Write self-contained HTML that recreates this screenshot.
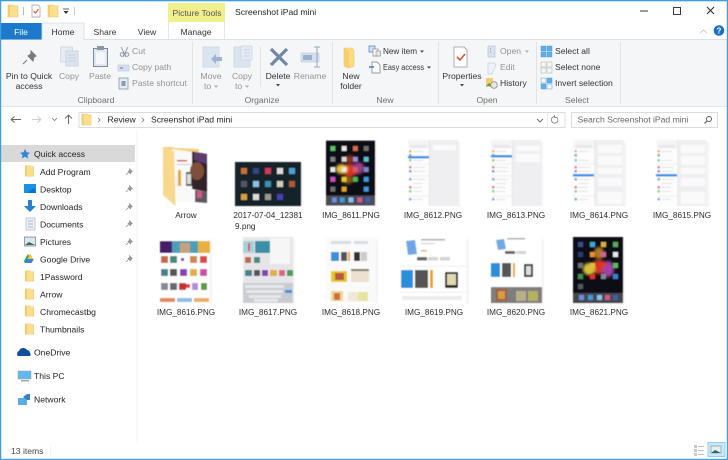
<!DOCTYPE html>
<html><head><meta charset="utf-8"><style>
html,body{margin:0;padding:0;background:#fff;width:728px;height:460px;overflow:hidden}
svg{display:block}
text{font-family:"Liberation Sans",sans-serif;font-size:8.6px;fill:#333}
.d{fill:#929292}.m{text-anchor:middle}.g{fill:#6f6f6f}.l{text-anchor:middle;font-size:8.2px;fill:#2c2c2c}.w{fill:#fff}
</style></head><body>
<svg width="728" height="460" viewBox="0 0 728 460" xmlns="http://www.w3.org/2000/svg">
<defs>
<filter id="t" filterUnits="userSpaceOnUse" x="0" y="0" width="728" height="460"><feGaussianBlur stdDeviation="0.28"/></filter>
<filter id="b" x="-10%" y="-10%" width="120%" height="120%"><feGaussianBlur stdDeviation="0.4"/></filter>
<filter id="bb" x="-30%" y="-30%" width="160%" height="160%"><feGaussianBlur stdDeviation="1.400"/></filter>
<filter id="s" x="-10%" y="-10%" width="120%" height="120%"><feGaussianBlur stdDeviation="0.8"/></filter>
<symbol id="f" viewBox="0 0 12 14" overflow="visible"><path d="M1 1h6v1h4v11H1z" fill="#fbdf8e" stroke="#e6c56c" stroke-width=".6"/><path d="M1 1h2v12H1z" fill="#f2cd6d"/></symbol>
<symbol id="p" viewBox="0 0 8 8"><path d="M4.500 .8l2.700 2.700-1 .5-.8 1.800-2.400-2.400 1.800-.8zM3.400 4.600L1 7" fill="#9b9b9b" stroke="#8a8a8a" stroke-width=".7"/></symbol>
<symbol id="set" viewBox="0 0 50 66">
<rect width="50" height="66" fill="#efeff2"/><rect width="21" height="66" fill="#f5f5f7"/><rect x="21" width=".5" height="66" fill="#d8d8dc"/>
<rect x="2" y="5" width="17" height="2.500" fill="#e6e6ea"/>
<g fill="#fdfdfd"><rect y="9" width="21" height="14"/><rect y="25" width="21" height="10"/><rect y="37" width="21" height="18"/><rect y="57" width="21" height="9"/></g>
<g fill="#f0b060"><rect x="1" y="10" width="2.500" height="2.500"/></g><g fill="#70a8e8"><rect x="1" y="14" width="2.500" height="2.500"/><rect x="1" y="38" width="2.500" height="2.500"/><rect x="1" y="58" width="2.500" height="2.500"/></g><g fill="#ea7a7a"><rect x="1" y="26" width="2.500" height="2.500"/><rect x="1" y="46" width="2.500" height="2.500"/></g><g fill="#88d0a0"><rect x="1" y="19" width="2.500" height="2.500"/><rect x="1" y="50" width="2.500" height="2.500"/></g><rect x="1" y="30" width="2.500" height="2.500" fill="#9488dc"/>
<g fill="#dadade"><rect x="5" y="11" width="10" height=".8"/><rect x="5" y="20" width="10" height=".8"/><rect x="5" y="27" width="12" height=".8"/><rect x="5" y="31" width="12" height=".8"/><rect x="5" y="39" width="12" height=".8"/><rect x="5" y="43" width="10" height=".8"/><rect x="5" y="47" width="9" height=".8"/><rect x="5" y="51" width="9" height=".8"/><rect x="5" y="59" width="9" height=".8"/></g>
</symbol>
<symbol id="ipadA" viewBox="0 0 50 66">
<rect width="50" height="66" fill="#101014"/>
<g filter="url(#bb)"><ellipse cx="25" cy="30" rx="9" ry="6" fill="#e03020"/><ellipse cx="16" cy="29" rx="6" ry="5" fill="#e8c040"/><ellipse cx="33" cy="28" rx="6" ry="6" fill="#963c90"/><ellipse cx="24" cy="19" rx="5" ry="4" fill="#8a3020"/><ellipse cx="22" cy="40" rx="6" ry="4" fill="#8a5a14"/></g>
<rect x="4.500" y="5.500" width="5" height="5" fill="#54c468"/><rect x="16" y="5.500" width="5" height="5" fill="#e8e8e8"/><rect x="27.500" y="5.500" width="5" height="5" fill="#d86a50"/><rect x="38.500" y="5.500" width="5" height="5" fill="#707070"/>
<rect x="4.500" y="16.500" width="5" height="5" fill="#808080"/><rect x="16" y="16.500" width="5" height="5" fill="#d8d8d8"/><rect x="27.500" y="16.500" width="5" height="5" fill="#9a8ad0"/><rect x="38.500" y="16.500" width="5" height="5" fill="#5cc0d0"/>
<rect x="4.500" y="27" width="5" height="5" fill="#e8e8e8"/><rect x="16" y="27" width="5" height="5" fill="#e8e8d8"/><rect x="27.500" y="27" width="5" height="5" fill="#e05a50"/><rect x="38.500" y="27" width="5" height="5" fill="#7a88c8"/>
<rect x="4.500" y="37" width="5" height="5" fill="#d050c0"/><rect x="16" y="37" width="5" height="5" fill="#e8c830"/><rect x="27.500" y="37" width="5" height="5" fill="#44b860"/><rect x="38.500" y="37" width="5" height="5" fill="#3a9ae0"/>
<rect x="4.500" y="47" width="5" height="5" fill="#707070"/><rect x="16" y="47" width="5" height="5" fill="#e8a020"/><rect x="38.500" y="47" width="5" height="5" fill="#3a9ae0"/>
<rect x="0" y="56" width="50" height="10" fill="#4c4c52"/><rect x="6" y="58" width="5" height="5" fill="#6a8ee0"/><rect x="14" y="58" width="5" height="5" fill="#3a9ae0"/><rect x="23" y="58" width="5" height="5" fill="#8ac0f0"/><rect x="32" y="58" width="5" height="5" fill="#d05a90"/><rect x="40" y="58" width="5" height="5" fill="#3a60b0"/>
</symbol>
<symbol id="ipadB" viewBox="0 0 50 66">
<rect width="50" height="66" fill="#0e0e12"/>
<g filter="url(#bb)"><ellipse cx="26" cy="30" rx="8" ry="7" fill="#d83020"/><ellipse cx="16" cy="32" rx="6" ry="6" fill="#d8c038"/><ellipse cx="35" cy="32" rx="6" ry="8" fill="#a040a8"/><ellipse cx="26" cy="16" rx="5" ry="6" fill="#b07828"/></g>
<rect x="5" y="5" width="5" height="5" fill="#3a4a90"/><rect x="17" y="5" width="5" height="5" fill="#3aa8d0"/><rect x="28" y="5" width="5" height="5" fill="#d8b040"/><rect x="40" y="5" width="5" height="5" fill="#58a860"/>
<rect x="5" y="15" width="5" height="5" fill="#2a3a70"/><rect x="17" y="15" width="5" height="5" fill="#e09030"/><rect x="28" y="15" width="5" height="5" fill="#d060a0"/><rect x="40" y="15" width="5" height="5" fill="#e8e8e8"/>
<rect x="5" y="26" width="5" height="5" fill="#707070"/><rect x="17" y="26" width="5" height="5" fill="#d8c040"/><rect x="28" y="26" width="5" height="5" fill="#d83a30"/><rect x="40" y="26" width="5" height="5" fill="#58b860"/>
<rect x="5" y="37" width="5" height="5" fill="#3a9050"/><rect x="17" y="37" width="5" height="5" fill="#e03028"/><rect x="28" y="37" width="5" height="5" fill="#808890"/><rect x="40" y="37" width="5" height="5" fill="#3a80c8"/>
<rect x="5" y="47" width="5" height="5" fill="#505860"/>
<rect x="0" y="56" width="50" height="10" fill="#46464c"/><rect x="6" y="58" width="5" height="5" fill="#6a8ee0"/><rect x="15" y="58" width="5" height="5" fill="#3a9ae0"/><rect x="24" y="58" width="5" height="5" fill="#8ac0f0"/><rect x="32" y="58" width="5" height="5" fill="#d05a90"/><rect x="40" y="58" width="5" height="5" fill="#3a60b0"/>
</symbol>
</defs>
<rect width="728" height="460" fill="#fff"/>
<g filter="url(#t)">
<!-- ribbon -->
<rect x="1" y="39" width="726" height="68" fill="#f5f6f7"/>
<rect x="1" y="39" width="726" height=".8" fill="#dadbdc"/>
<rect x="1" y="106" width="726" height="1" fill="#e4e5e6"/>

<!-- qat -->
<use href="#f" x="7" y="4" width="12" height="14"/>
<rect x="23" y="7" width="1" height="8" fill="#bbb"/>
<path d="M32 5h6l2 2v10h-8z" fill="#fff" stroke="#999" stroke-width=".7"/><path d="M33.500 11l2 2 3-4" fill="none" stroke="#d8552a" stroke-width="1.100"/>
<use href="#f" x="47" y="4" width="12" height="14"/>
<path d="M63 9h6" stroke="#333" stroke-width=".8"/><path d="M63.500 11h5l-2.500 3z" fill="#333"/>
<rect x="74" y="7" width="1" height="8" fill="#ccc"/>

<!-- title -->
<text x="235" y="15" style="fill:#222">Screenshot iPad mini</text>
<path d="M640 11h8" stroke="#222" stroke-width=".9"/>
<rect x="673.500" y="7.500" width="7" height="7" fill="none" stroke="#222" stroke-width=".9"/>
<path d="M707 7l7 7M714 7l-7 7" stroke="#222" stroke-width=".9"/>
<rect x="168" y="3" width="57" height="19" fill="#eff08b"/>
<text class="m" x="197" y="16" style="fill:#555">Picture Tools</text>

<!-- tabs -->
<rect x="1" y="23" width="41" height="16.500" fill="#1a79cb"/>
<text class="m w" x="21" y="35">File</text>
<path d="M42 39.500V23h42v16.500" fill="#f5f6f7" stroke="#dadbdc" stroke-width=".8"/>
<rect x="42.500" y="38" width="41" height="3" fill="#f5f6f7"/>
<text class="m" x="63" y="35">Home</text>
<text class="m" x="105" y="35">Share</text>
<text class="m" x="147" y="35">View</text>
<path d="M168.500 22v17M224.500 22v17" stroke="#e2e2e2" stroke-width=".8"/>
<text class="m" x="196" y="35">Manage</text>
<path d="M700 33l3.500-3 3.500 3" fill="none" stroke="#bbb" stroke-width=".8"/>
<circle cx="719" cy="30.500" r="5.300" fill="#1a6fc4"/><text class="m w" x="719" y="33.500" style="font-size:8px;font-weight:bold">?</text>

<!-- ribbon: clipboard -->
<path d="M31 51l5 5-2 1-1 4-5-5 3-2zM27 60l-4 4" fill="#7d7d7d" stroke="#777" stroke-width="1"/>
<text class="m" x="29" y="79">Pin to Quick</text><text class="m" x="29" y="89">access</text>
<rect x="60.500" y="47" width="12" height="15" fill="#e6ebf3" stroke="#cbd4e0" stroke-width=".8"/><rect x="66" y="51" width="12" height="15" fill="#dbe4ef" stroke="#c5cfdd" stroke-width=".8"/>
<path d="M68 55h8M68 58h8M68 61h8" stroke="#bcc8d8" stroke-width=".8"/>
<text class="m d" x="69" y="79">Copy</text>
<rect x="93.500" y="48.500" width="14" height="18" fill="#e0e7f1" stroke="#7c8a9c" stroke-width="1"/><rect x="97" y="46" width="7" height="4" fill="#8a97a8"/><rect x="96" y="52" width="9" height="12" fill="#f5f7fa"/>
<text class="m d" x="100" y="79">Paste</text>
<path d="M121 47l5 10M128 47l-5 10" stroke="#8a99ad" stroke-width=".9"/><circle cx="122" cy="54.500" r="1.800" fill="none" stroke="#8a99ad"/><circle cx="127" cy="54.500" r="1.800" fill="none" stroke="#8a99ad"/>
<text class="d" x="132" y="54">Cut</text>
<rect x="118" y="65" width="11" height="6" fill="#d4dfed" stroke="#bcc9da" stroke-width=".6"/><path d="M120 68h3" stroke="#556" stroke-width=".8"/>
<text class="d" x="132" y="70">Copy path</text>
<rect x="119" y="78" width="9" height="11" fill="#e6ecf4" stroke="#8a99ad" stroke-width=".8"/><rect x="121.500" y="81" width="4" height="5" fill="#8a99ad"/>
<text class="d" x="132" y="86">Paste shortcut</text>
<text class="m g" x="96" y="103">Clipboard</text>
<rect x="192" y="42" width=".9" height="62" fill="#e0e1e2"/>

<!-- organize -->
<rect x="203" y="47" width="16" height="20" fill="#dbe5f1" stroke="#c8d4e3" stroke-width=".7"/><path d="M222 57h-6v-3l-5 5 5 5v-3h6z" fill="#9db3cf"/>
<text class="m d" x="211" y="79">Move</text><text class="d" x="204" y="89">to</text><path d="M214 85.500h4l-2 2.300z" fill="#a8a8a8"/>
<rect x="234" y="47" width="16" height="20" fill="#dbe5f1" stroke="#c8d4e3" stroke-width=".7"/><rect x="241" y="46" width="11" height="14" fill="#e6ebf3" stroke="#c8d4e3" stroke-width=".7"/><path d="M244 50h6M244 53h6M244 56h6" stroke="#c3cfde" stroke-width=".7"/>
<text class="m d" x="242" y="79">Copy</text><text class="d" x="235" y="89">to</text><path d="M245 85.500h4l-2 2.300z" fill="#a8a8a8"/>
<rect x="260" y="46" width=".8" height="41" fill="#dedfe0"/>
<path d="M271 49l16 16M287 49l-16 16" stroke="#6f86a6" stroke-width="3.200"/>
<text class="m" x="278" y="79">Delete</text><path d="M276 84h4l-2 2.500z" fill="#444"/>
<rect x="301" y="53" width="18" height="9" rx="1" fill="#d3dfed" stroke="#c2cfdf" stroke-width=".7"/><rect x="303" y="55" width="9" height="5" fill="#9cb0c9"/><path d="M317 47v20M314 47h6M314 67h6" stroke="#93a7c1" stroke-width="1"/>
<text class="m d" x="310" y="79">Rename</text>
<text class="m g" x="262" y="103">Organize</text>
<rect x="332" y="42" width=".9" height="62" fill="#e0e1e2"/>

<!-- new -->
<path d="M344 48h8l2 3v15l-5 2-5-2z" fill="#fbdb85" stroke="#ecc76a" stroke-width=".6"/><path d="M344 48l5 3v17l-5-2z" fill="#f6ce6c"/>
<text class="m" x="351" y="79">New</text><text class="m" x="351" y="89">folder</text>
<rect x="369" y="46" width="6" height="6" fill="#cfe0f3" stroke="#5a8cc4" stroke-width=".8"/><rect x="373" y="49" width="5" height="7" fill="#fff" stroke="#888" stroke-width=".7"/><rect x="376" y="51" width="4.500" height="5" fill="#dfe6ef" stroke="#888" stroke-width=".6"/>
<text x="383" y="54" textLength="34" lengthAdjust="spacingAndGlyphs">New item</text><path d="M420 50.500h4l-2 2.300z" fill="#444"/>
<path d="M372 62h5l3 3v8h-8z" fill="#fff" stroke="#777" stroke-width=".7"/><path d="M369 67h5" stroke="#2a70c0" stroke-width="1.300"/>
<text x="383" y="70" textLength="41" lengthAdjust="spacingAndGlyphs">Easy access</text><path d="M427 66.500h4l-2 2.300z" fill="#444"/>
<text class="m g" x="385" y="103">New</text>
<rect x="438" y="42" width=".9" height="62" fill="#e0e1e2"/>

<!-- open -->
<path d="M454 47h10l3 3v17h-13z" fill="#fff" stroke="#999" stroke-width=".8"/><path d="M457 57l3 3 5-6" fill="none" stroke="#e0552a" stroke-width="1.600"/>
<text class="m" x="462" y="79">Properties</text><path d="M460 84h4l-2 2.500z" fill="#444"/>
<rect x="488" y="46" width="7" height="11" fill="#d9e2ee" stroke="#b8c5d6" stroke-width=".7"/><path d="M490 49h1M490 52h1" stroke="#7d8ea5"/>
<text class="d" x="500" y="54">Open</text><path d="M525 50.500h4l-2 2.300z" fill="#aaa"/>
<path d="M488 63h6l2 2-4 9h-4z" fill="#eef2f8" stroke="#c3cfde" stroke-width=".7"/>
<text class="d" x="500" y="70">Edit</text>
<rect x="486" y="78" width="7" height="9" fill="#f4cf6c"/><path d="M486 86l3-3 3 3z" fill="#5aa83a"/><circle cx="494" cy="85" r="3.300" fill="#e6e6e6" stroke="#777" stroke-width=".7"/>
<text x="500" y="86">History</text>
<text class="m g" x="487" y="103">Open</text>
<rect x="536" y="42" width=".9" height="62" fill="#e0e1e2"/>

<!-- select -->
<g fill="#62aee8" stroke="#3d8fd0" stroke-width=".4"><rect x="541" y="46" width="5" height="5"/><rect x="547" y="46" width="5" height="5"/><rect x="541" y="52" width="5" height="5"/><rect x="547" y="52" width="5" height="5"/></g>
<text x="555" y="54">Select all</text>
<g fill="#f5f6f7" stroke="#bbb" stroke-width=".6"><rect x="541" y="62" width="5" height="5"/><rect x="547" y="62" width="5" height="5"/><rect x="541" y="68" width="5" height="5"/><rect x="547" y="68" width="5" height="5"/></g>
<text x="555" y="70">Select none</text>
<g stroke="#5d9bd0" stroke-width=".5"><rect x="541" y="78" width="5" height="5" fill="#f5f6f7"/><rect x="547" y="78" width="5" height="5" fill="#62aee8"/><rect x="541" y="84" width="5" height="5" fill="#62aee8"/><rect x="547" y="84" width="5" height="5" fill="#f5f6f7"/></g>
<text x="555" y="86">Invert selection</text>
<text class="m g" x="577" y="103">Select</text>
<rect x="620" y="42" width=".9" height="62" fill="#e0e1e2"/>

<!-- address row -->
<path d="M11 119.500h10M11 119.500l3.500-3M11 119.500l3.500 3" fill="none" stroke="#666" stroke-width="1"/>
<path d="M32 119.500h9M41 119.500l-3.500-3M41 119.500l-3.500 3" fill="none" stroke="#ccc" stroke-width="1"/>
<path d="M52 118l2.500 2.500 2.500-2.500" fill="none" stroke="#777" stroke-width=".8"/>
<path d="M68.500 124v-9M68.500 115l-3.500 3.500M68.500 115l3.500 3.500" fill="none" stroke="#666" stroke-width="1"/>
<rect x="79" y="112.500" width="486" height="15" fill="#fff" stroke="#d9d9d9" stroke-width=".9"/>
<use href="#f" x="81" y="113" width="11" height="13"/>
<path d="M98 118l2 2-2 2M142 118l2 2-2 2" fill="none" stroke="#666" stroke-width=".7"/>
<text x="107.500" y="122.500" style="fill:#222">Review</text>
<text x="151" y="122.500" style="fill:#222">Screenshot iPad mini</text>
<path d="M537 119l3 3 3-3" fill="none" stroke="#666" stroke-width=".9"/>
<rect x="547" y="113" width=".7" height="14" fill="#e5e5e5"/>
<path d="M557 117.500a3.300 3.300 0 1 1-2.500-1M554.500 115v2.500h2.500" fill="none" stroke="#777" stroke-width=".8"/>
<rect x="571.500" y="112.500" width="146" height="15" fill="#fff" stroke="#d9d9d9" stroke-width=".9"/>
<text x="577.500" y="122.500" style="fill:#666">Search Screenshot iPad mini</text>
<circle cx="709" cy="119" r="2.500" fill="none" stroke="#555" stroke-width=".9"/><path d="M707 121l-2.500 2.500" stroke="#555" stroke-width="1.200"/>

<!-- nav -->
<rect x="136.500" y="130" width=".8" height="313" fill="#f0f0f0"/>
<rect x="1" y="145" width="134" height="17" fill="#d9d9d9"/>
<path d="M25 149l1.500 3.300 3.500.4-2.600 2.300.8 3.500-3.200-1.900-3.200 1.900.8-3.500L20 152.700l3.500-.4z" fill="#2e86d6"/>
<text x="34" y="157" style="fill:#222">Quick access</text>
<use href="#f" x="24" y="165" width="11" height="12"/><text x="40" y="175" style="fill:#222">Add Program</text>
<rect x="24" y="184" width="12" height="9" fill="#1a8fe6"/><path d="M27 193l7-5 2 5z" fill="#0a6ec4"/><text x="40" y="192.500" style="fill:#222">Desktop</text>
<path d="M28 200h4v6h4l-6 6-6-6h4z" fill="#2e7fd0"/><text x="40" y="210" style="fill:#222">Downloads</text>
<rect x="26" y="218" width="9" height="12" fill="#eef1f5" stroke="#aab" stroke-width=".6"/><path d="M28 221h5M28 224h5M28 227h5" stroke="#7aa5cc" stroke-width=".8"/><text x="40" y="227.500" style="fill:#222">Documents</text>
<rect x="24.500" y="237" width="11" height="9" fill="#dde6ef" stroke="#777" stroke-width=".7"/><path d="M25 245l4-3 6 3z" fill="#3a6a5a"/><text x="40" y="245" style="fill:#222">Pictures</text>
<path d="M30 254l3 5h-6z" fill="#f4c430" stroke="#f4c430" stroke-width=".5"/><path d="M27 259l-2.500 4h7l2.500-4z" fill="#3a80e8"/><path d="M28 254l-4 7 1 2 4-7z" fill="#1fa463"/><text x="40" y="262.500" style="fill:#222">Google Drive</text>
<use href="#f" x="24" y="270" width="11" height="12"/><text x="40" y="280" style="fill:#222">1Password</text>
<use href="#f" x="24" y="288" width="11" height="12"/><text x="40" y="297.500" style="fill:#222">Arrow</text>
<use href="#f" x="24" y="305" width="11" height="12"/><text x="40" y="315" style="fill:#222">Chromecastbg</text>
<use href="#f" x="24" y="323" width="11" height="12"/><text x="40" y="332.500" style="fill:#222">Thumbnails</text>
<use href="#p" x="125" y="168" width="8" height="8"/><use href="#p" x="125" y="185" width="8" height="8"/><use href="#p" x="125" y="203" width="8" height="8"/><use href="#p" x="125" y="220" width="8" height="8"/><use href="#p" x="125" y="238" width="8" height="8"/><use href="#p" x="125" y="255" width="8" height="8"/>
<path d="M18 356a3 3 0 0 1 1-5 4.500 4.500 0 0 1 8-1 3 3 0 0 1 3 3 2 2 0 0 1 0 3z" fill="#0f4f9c"/>
<text x="34" y="355.500" style="fill:#222">OneDrive</text>
<rect x="18" y="371" width="13" height="8" fill="#5fb8ee" stroke="#9aa" stroke-width=".6"/><rect x="21" y="380" width="8" height="1.500" fill="#aaa"/>
<text x="34" y="379" style="fill:#222">This PC</text>
<rect x="18" y="398" width="9" height="7" fill="#56aee6"/><path d="M23 397l4-3h3v6h-3z" fill="#3a7fc0"/>
<text x="34" y="402.500" style="fill:#222">Network</text>

<!-- files -->
<g filter="url(#b)">
<path d="M163 147h10l1 1 25 1v46l-10 6-26-6z" fill="#f2cf7c"/>
<path d="M172 149l35 5v49l-32-2z" fill="#f9f9f9"/>
<path d="M192 151.500l15 2.500v38l-15-3z" fill="#30222a"/><ellipse cx="197" cy="171" rx="7" ry="9" fill="#80503a"/><path d="M194 152l13 2v10l-13-4z" fill="#5c3c70"/>
<path d="M195 190l12 2v11l-12-1z" fill="#5a5a60"/>
<rect x="178" y="170" width="3" height="16" fill="#e8a21c"/><rect x="186" y="172" width="6" height="14" fill="#555"/><rect x="187" y="174" width="4" height="10" fill="#ddd"/><rect x="197" y="191" width="5" height="7" fill="#d4568a"/>
<rect x="177" y="160" width="10" height="1.500" fill="#d05040"/><rect x="177" y="164" width="14" height="1" fill="#ccc"/>
<path d="M163 147l11 4 1.500 55-12.500-11z" fill="#f8d88c"/>

<rect x="235" y="162" width="66" height="44" fill="#17202c"/>
<rect x="241" y="168" width="6" height="6" fill="#c87030"/><rect x="253" y="168" width="6" height="6" fill="#2a4a80"/><rect x="265" y="168" width="6" height="6" fill="#d03a5a"/><rect x="277" y="168" width="6" height="6" fill="#ddd"/><rect x="289" y="168" width="6" height="6" fill="#4aa0d0"/>
<rect x="241" y="181" width="6" height="6" fill="#556"/><rect x="253" y="181" width="6" height="6" fill="#8ac0e0"/><rect x="265" y="181" width="6" height="6" fill="#3a90b0"/><rect x="277" y="181" width="6" height="6" fill="#d0d0c0"/><rect x="289" y="181" width="6" height="6" fill="#a85a30"/>
<rect x="241" y="194" width="6" height="6" fill="#d8a040"/><rect x="253" y="194" width="6" height="6" fill="#ddd"/><rect x="265" y="194" width="6" height="6" fill="#998"/><rect x="277" y="194" width="6" height="6" fill="#4a40b0"/>

<use href="#ipadA" x="326" y="140" width="49" height="66"/>
<use href="#set" x="408" y="140" width="50" height="66"/><rect x="408" y="156" width="21" height="2.500" fill="#3a90f0"/><rect x="433" y="145" width="23" height="5" fill="#fbfbfb"/>
<use href="#set" x="491" y="140" width="50" height="66"/><rect x="491" y="155" width="21" height="2.500" fill="#3a90f0"/><rect x="516" y="146" width="24" height="5" fill="#fbfbfb"/><rect x="516" y="154" width="24" height="8" fill="#fbfbfb"/>
<use href="#set" x="573" y="140" width="51" height="66"/><rect x="573" y="174" width="21" height="2.500" fill="#3a90f0"/>
<use href="#set" x="656" y="140" width="51" height="66"/><rect x="656" y="174" width="21" height="2.500" fill="#3a90f0"/>
<g fill="#fafafa"><rect x="598" y="145" width="24" height="8"/><rect x="598" y="156" width="24" height="9"/><rect x="598" y="168" width="24" height="6"/><rect x="598" y="178" width="24" height="8"/><rect x="598" y="192" width="24" height="12"/><rect x="681" y="145" width="24" height="8"/><rect x="681" y="156" width="24" height="9"/><rect x="681" y="168" width="24" height="6"/><rect x="681" y="178" width="24" height="8"/><rect x="681" y="192" width="24" height="12"/></g>

<rect x="160" y="237" width="50" height="66" fill="#fff"/>
<rect x="160" y="241" width="12" height="12" fill="#4a1a6a"/><rect x="172" y="241" width="26" height="12" fill="#4aa0b8"/><rect x="180" y="243" width="10" height="10" fill="#c8a080"/><rect x="198" y="241" width="12" height="12" fill="#e8b040"/>
<rect x="161" y="256" width="7" height="7" fill="#c06a4a"/><rect x="170" y="256" width="7" height="7" fill="#4a8a7a"/><rect x="181" y="258" width="3" height="3" fill="#6a40b0"/><rect x="190" y="256" width="7" height="7" fill="#d08a50"/><rect x="200" y="256" width="7" height="7" fill="#d84a4a"/>
<rect x="161" y="269" width="7" height="7" fill="#4a8090"/><rect x="170" y="269" width="7" height="7" fill="#555"/><rect x="180" y="269" width="7" height="7" fill="#8a40b0"/><rect x="190" y="269" width="7" height="7" fill="#e0b040"/><rect x="200" y="269" width="7" height="7" fill="#d050a0"/>
<rect x="161" y="283" width="7" height="7" fill="#889"/><rect x="170" y="283" width="7" height="7" fill="#667"/><rect x="179" y="283" width="7" height="7" fill="#c83030"/><rect x="186" y="284" width="4" height="4" fill="#e04040"/><rect x="192" y="283" width="6" height="7" fill="#b090e0"/><rect x="201" y="283" width="6" height="7" fill="#5a9a40"/>
<rect x="160" y="298" width="15" height="4" fill="#e08a5a"/><rect x="177" y="298" width="15" height="4" fill="#8ac0e8"/><rect x="194" y="298" width="15" height="4" fill="#eab060"/>

<rect x="243" y="237" width="50" height="66" fill="#e6e6ea"/>
<rect x="243" y="241" width="11" height="12" fill="#a8d0d8"/><rect x="248" y="243" width="2" height="8" fill="#d84a60"/><rect x="255" y="241" width="15" height="12" fill="#3a90a8"/><rect x="270" y="238" width="20" height="26" fill="#f6f6f6"/>
<rect x="245" y="270" width="7" height="6" fill="#4a8090"/><rect x="254" y="270" width="6" height="6" fill="#555"/><rect x="262" y="270" width="6" height="6" fill="#8a40b0"/><rect x="270" y="270" width="7" height="6" fill="#e0b040"/><rect x="279" y="270" width="6" height="6" fill="#d86a80"/><rect x="287" y="270" width="6" height="6" fill="#4a9a60"/><rect x="245" y="257" width="6" height="6" fill="#c06a4a"/><rect x="254" y="257" width="6" height="6" fill="#4a8a7a"/>
<rect x="243" y="283" width="50" height="20" fill="#c8ccd2"/><g fill="#e6e8ea"><rect x="245" y="285" width="39" height="3"/><rect x="246" y="290" width="37" height="3"/><rect x="249" y="295" width="32" height="3"/><rect x="254" y="299" width="24" height="3"/></g><rect x="285" y="290" width="7" height="3" fill="#3a90e0"/>

<rect x="326" y="237" width="50" height="66" fill="#fafafa"/>
<rect x="331" y="252" width="8" height="9" fill="#3a90d8"/><rect x="341" y="252" width="6" height="9" fill="#555"/><rect x="348" y="252" width="2" height="9" fill="#e8a030"/><rect x="354" y="252" width="6" height="9" fill="#333"/><rect x="361" y="252" width="6" height="9" fill="#ccc"/>
<rect x="331" y="271" width="16" height="11" fill="#e8c820"/><rect x="335" y="273" width="9" height="7" fill="#b8584a"/><rect x="351" y="271" width="18" height="11" fill="#ece0d0"/><rect x="351" y="269" width="18" height="2" fill="#776"/>
<rect x="331" y="291" width="12" height="10" fill="#e8d890"/><rect x="334" y="293" width="6" height="7" fill="#d86a40"/><rect x="348" y="292" width="10" height="9" fill="#f0e8d8"/><rect x="358" y="292" width="10" height="9" fill="#e8e4a0"/>
<rect x="331" y="241" width="20" height="3" fill="#d8dde4"/><rect x="354" y="241" width="14" height="3" fill="#d8dde4"/>

<rect x="400" y="237" width="67" height="66" fill="#fff"/>
<path d="M406 241l9-1 2 14-9 1z" fill="#6fa6e4"/>
<rect x="421" y="239" width="24" height="1.500" fill="#aaa"/><rect x="421" y="243" width="14" height="1" fill="#ccc"/><rect x="421" y="250" width="6" height="1.300" fill="#e8a030"/>
<rect x="417" y="257" width="10" height="3.500" fill="#666"/><rect x="428" y="257" width="10" height="3.500" fill="#d4d4d4"/><rect x="440" y="257" width="10" height="3.500" fill="#d4d4d4"/>
<rect x="401" y="270" width="12" height="18" fill="#2c8fdb"/><rect x="415" y="270" width="13" height="18" fill="#555"/><rect x="430" y="270" width="3" height="18" fill="#eea21c"/>
<rect x="445" y="272" width="13" height="16" rx="1" fill="#2c2c2c"/><rect x="447" y="274" width="9" height="11" fill="#e0d8b0"/>
<rect x="400" y="266" width="67" height=".6" fill="#e2e2e2"/><rect x="400" y="292" width="67" height=".6" fill="#e2e2e2"/><rect x="402" y="296" width="60" height="4" fill="#ececec"/>

<rect x="491" y="237" width="51" height="66" fill="#fff"/>
<path d="M496 240l8-1 2 10-8 1z" fill="#6fa8e4"/><rect x="507" y="238" width="18" height="1.500" fill="#aaa"/><rect x="505" y="251" width="10" height="3" fill="#666"/><rect x="516" y="251" width="10" height="3" fill="#d4d4d4"/>
<rect x="491" y="263" width="9" height="14" fill="#2c8fdb"/><rect x="502" y="263" width="9" height="14" fill="#555"/><rect x="513" y="263" width="2" height="14" fill="#eea21c"/><rect x="524" y="264" width="9" height="13" fill="#333"/><rect x="526" y="266" width="5" height="9" fill="#ddd"/>
<rect x="491" y="287" width="51" height="16" fill="#7e7e7e"/><rect x="496" y="289" width="11" height="12" fill="#a85a40"/><rect x="498" y="291" width="7" height="8" fill="#d0a040"/><rect x="516" y="291" width="10" height="10" fill="#b8b088"/><rect x="528" y="291" width="10" height="10" fill="#b8b060"/>

<use href="#ipadB" x="573" y="237" width="50" height="66"/>
</g>
<g fill="#d2d2d2" filter="url(#s)" opacity=".35">
<rect x="301" y="164" width="1.500" height="43"/><rect x="375" y="142" width="1.500" height="65"/><rect x="458" y="142" width="1.500" height="65"/><rect x="541" y="142" width="1.500" height="65"/><rect x="624" y="142" width="1.500" height="65"/><rect x="707" y="142" width="1.500" height="65"/><rect x="210" y="239" width="1.500" height="65"/><rect x="293" y="239" width="1.500" height="65"/><rect x="376" y="239" width="1.500" height="65"/><rect x="467" y="239" width="1.500" height="65"/><rect x="542" y="239" width="1.500" height="65"/><rect x="623" y="239" width="1.500" height="65"/>
</g>

<text class="l" x="186" y="218">Arrow</text>
<text class="l" x="268" y="218">2017-07-04_12381</text><text class="l" x="235" y="229" style="text-anchor:start">9.png</text>
<text class="l" x="351" y="218">IMG_8611.PNG</text>
<text class="l" x="433" y="218">IMG_8612.PNG</text>
<text class="l" x="516" y="218">IMG_8613.PNG</text>
<text class="l" x="599" y="218">IMG_8614.PNG</text>
<text class="l" x="682" y="218">IMG_8615.PNG</text>
<text class="l" x="186" y="315">IMG_8616.PNG</text>
<text class="l" x="268" y="315">IMG_8617.PNG</text>
<text class="l" x="351" y="315">IMG_8618.PNG</text>
<text class="l" x="434" y="315">IMG_8619.PNG</text>
<text class="l" x="516" y="315">IMG_8620.PNG</text>
<text class="l" x="599" y="315">IMG_8621.PNG</text>

<!-- status -->
<text x="11" y="454" style="fill:#444">13 items</text>
<rect x="50" y="446" width=".7" height="10" fill="#eee"/>
<g fill="#c8c8c8"><rect x="694" y="445" width="3" height="3"/><rect x="694" y="449" width="3" height="3"/><rect x="694" y="453" width="3" height="3"/></g><path d="M698 446.500h6M698 450.500h6M698 454.500h6" stroke="#aaa" stroke-width=".8"/>
<rect x="708" y="442.500" width="17" height="14" fill="#cbe8f8" stroke="#8ed0f4" stroke-width="1"/>
<rect x="711" y="446" width="10" height="7" fill="#e6eef0" stroke="#7a8a90" stroke-width=".6"/><path d="M711 453l4-3 6 3z" fill="#2a6a60"/>
</g>
<!-- window border -->
<rect x="0" y="0" width="728" height="1.300" fill="#3f9de0"/>
<rect x="0" y="0" width="1.200" height="460" fill="#3f9de0"/>
<rect x="726.800" y="0" width="1.200" height="460" fill="#3f9de0"/>
<rect x="0" y="458.800" width="728" height="1.200" fill="#3f9de0"/>
</svg>
</body></html>
